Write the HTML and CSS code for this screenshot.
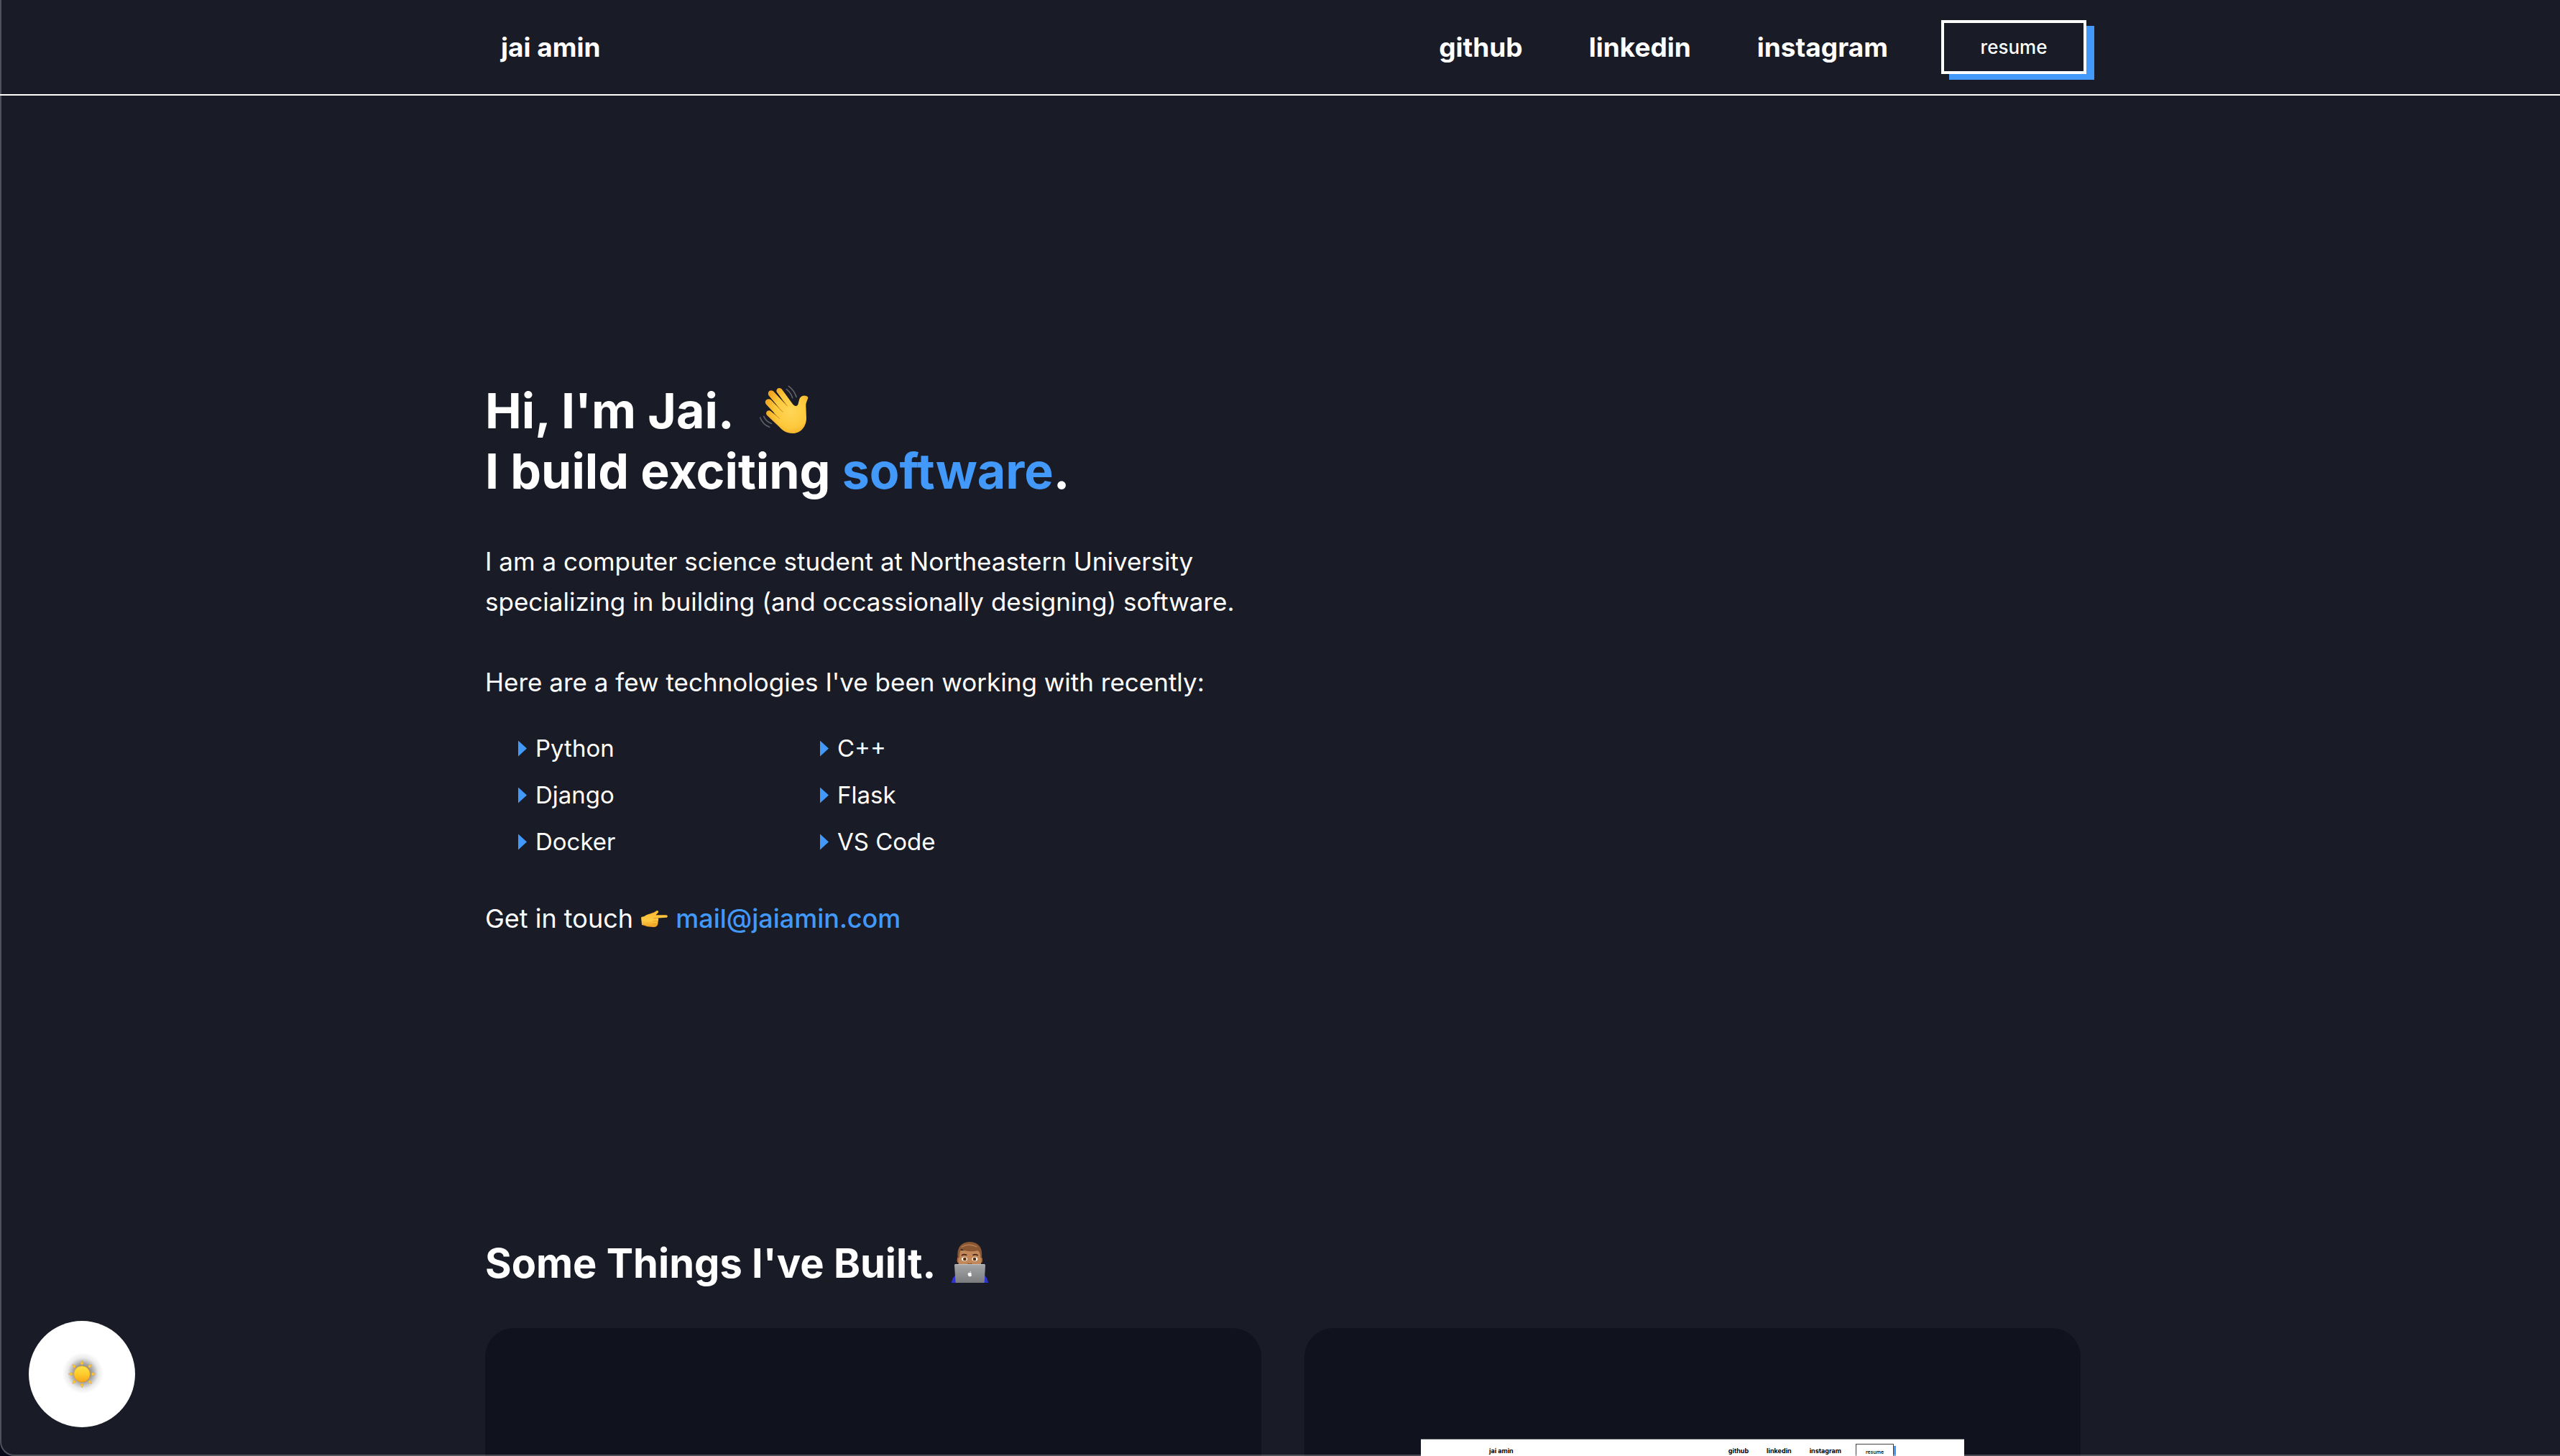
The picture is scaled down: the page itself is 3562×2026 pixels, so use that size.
FILE: index.html
```html
<!DOCTYPE html>
<html lang="en">
<head>
<meta charset="utf-8">
<meta name="viewport" content="width=device-width, initial-scale=1">
<title>jai amin</title>
<link rel="stylesheet" href="styles.css">
</head>
<body>
<div class="page">
  <header class="site-header">
    <div class="header-inner">
      <a class="logo" href="#">jai amin</a>
      <nav class="nav">
        <a href="#">github</a>
        <a href="#">linkedin</a>
        <a href="#">instagram</a>
        <button class="resume" type="button">resume</button>
      </nav>
    </div>
  </header>

  <main class="content">
    <section class="hero">
      <h1>Hi, I'm Jai.<svg class="wave" viewBox="50 45 210 210" aria-hidden="true">
          <defs>
            <radialGradient id="skin" cx="60%" cy="50%" r="62%">
              <stop offset="0" stop-color="#ffd657"/>
              <stop offset=".6" stop-color="#fdc93c"/>
              <stop offset="1" stop-color="#f0a420"/>
            </radialGradient>
          </defs>
          <path fill="url(#skin)" d="M124 76C119 60 140 54 147 67L192 128Q206 142 213 128L219 106C224 89 246 87 255 98C256 104 246 118 246 132L248 185C248 220 225 249 190 249C165 249 150 238 135 222L84 174C74 162 86 149 98 155L132 184L79 127C70 110 88 100 100 109L148 160L90 90C84 74 98 64 110 73L167 134Z"/>
          <path fill="none" stroke="#dc8f1c" stroke-width="3" stroke-linecap="round" d="M147 107L168 135M123 132L150 160M113 166L136 187"/>
          <path fill="none" stroke="#606265" stroke-width="5" stroke-linecap="round" d="M174 52Q198 70 206 97M165 65Q184 80 190 101M55 183Q66 212 94 223M70 178Q80 200 102 208"/>
        </svg><br>I build exciting <span class="accent">software</span>.</h1>

      <p class="lead">I am a computer science student at Northeastern University<br>specializing in building (and occassionally designing) software.</p>
      <p class="lead">Here are a few technologies I've been working with recently:</p>

      <ul class="tech">
        <li>Python</li>
        <li>C++</li>
        <li>Django</li>
        <li>Flask</li>
        <li>Docker</li>
        <li>VS Code</li>
      </ul>

      <p class="contact">Get in touch <svg class="point" viewBox="64 74 116 76" aria-hidden="true">
          <defs>
            <linearGradient id="hand" x1="0" y1="0" x2="0" y2="1">
              <stop offset="0" stop-color="#fbb62c"/>
              <stop offset=".6" stop-color="#ffcb45"/>
              <stop offset="1" stop-color="#eda01c"/>
            </linearGradient>
          </defs>
          <path fill="url(#hand)" d="M66 108Q67 102 78 102L88 96C98 91 118 88 129 79C137 73 143 82 136 88L128 96L171 96C180 96 180 107 171 107L138 109C141 116 138 121 137 127C138 140 131 147 117 147L92 145Q82 141 69 138Z"/>
          <path fill="none" stroke="#e49a1e" stroke-width="3" stroke-linecap="round" d="M118 110L138 109M117 122L137 121M116 134L135 134"/>
        </svg> <a class="mail" href="mailto:mail@jaiamin.com">mail@jaiamin.com</a></p>
    </section>

    <section class="work">
      <h2>Some Things I've Built. <svg class="coder" viewBox="75 54 153 171" aria-hidden="true">
          <defs>
            <linearGradient id="lid" x1="0" y1="0" x2="0" y2="1">
              <stop offset="0" stop-color="#a3a5a7"/>
              <stop offset="1" stop-color="#7b7d80"/>
            </linearGradient>
          </defs>
          <path fill="#2f33d6" d="M75 225Q78 198 100 188H204Q224 198 228 225Z"/>
          <ellipse cx="103" cy="130" rx="5" ry="12" fill="#a86d43"/>
          <ellipse cx="199" cy="130" rx="5" ry="12" fill="#a86d43"/>
          <path fill="#c2885a" d="M104 90H198V150Q190 175 151 178Q110 175 104 150Z"/>
          <path fill="#8a5732" d="M101 122C96 80 112 55 151 54C190 55 206 80 201 122L195 120C196 100 190 96 184 91C160 96 130 94 116 84C110 95 108 104 108 120Z"/>
          <path fill="none" stroke="#b07a50" stroke-width="5" stroke-linecap="round" d="M118 75Q145 58 180 74"/>
          <path fill="none" stroke="#4a2a17" stroke-width="5" stroke-linecap="round" d="M118 110Q127 104 137 109M165 109Q175 104 184 110"/>
          <ellipse cx="129" cy="126" rx="12" ry="8" fill="#fff"/>
          <ellipse cx="172" cy="126" rx="12" ry="8" fill="#fff"/>
          <circle cx="130" cy="126" r="7" fill="#5b3010"/>
          <circle cx="171" cy="126" r="7" fill="#5b3010"/>
          <path fill="none" stroke="#8c5332" stroke-width="4" stroke-linecap="round" d="M144 144Q151 149 158 144"/>
          <path fill="url(#lid)" d="M90 147H212Q216 147 216 152L212 225H92L87 152Q87 147 90 147Z"/>
          <path fill="none" stroke="#c2c4c6" stroke-width="3" d="M90 149H213"/>
          <path fill="#fff" d="M151 184C146 181 142 185 143 190C144 196 148 200 151 198C155 200 158 197 160 193C156 191 156 187 159 185C156 182 154 183 151 184ZM151 182Q151 177 156 176Q156 181 151 182Z"/>
        </svg></h2>
      <div class="cards">
        <article class="card"></article>
        <article class="card">
          <div class="preview">
            <span class="preview-logo">jai amin</span>
            <div class="preview-nav">
              <span>github</span>
              <span>linkedin</span>
              <span>instagram</span>
              <span class="preview-resume">resume</span>
            </div>
          </div>
        </article>
      </div>
    </section>
  </main>
</div>

<button class="theme-toggle" type="button" aria-label="Switch theme">
  <svg viewBox="-90 -90 180 180" aria-hidden="true">
    <defs>
      <radialGradient id="glow">
        <stop offset="0" stop-color="#000" stop-opacity=".7"/>
        <stop offset=".45" stop-color="#000" stop-opacity=".36"/>
        <stop offset=".75" stop-color="#000" stop-opacity=".08"/>
        <stop offset="1" stop-color="#000" stop-opacity="0"/>
      </radialGradient>
      <linearGradient id="sun" x1="0" y1="0" x2="0" y2="1">
        <stop offset="0" stop-color="#ffe14a"/>
        <stop offset=".5" stop-color="#ffcc2a"/>
        <stop offset="1" stop-color="#f5a51d"/>
      </linearGradient>
      <path id="ray" d="M-7-42L0-57L7-42Q0-38-7-42Z"/>
    </defs>
    <circle cx="4" cy="-4" r="86" fill="url(#glow)"/>
    <g fill="#fdc935" stroke="#d98e2b" stroke-width="1">
      <use href="#ray"/>
      <use href="#ray" transform="rotate(45)"/>
      <use href="#ray" transform="rotate(90)"/>
      <use href="#ray" transform="rotate(135)"/>
      <use href="#ray" transform="rotate(180)"/>
      <use href="#ray" transform="rotate(225)"/>
      <use href="#ray" transform="rotate(270)"/>
      <use href="#ray" transform="rotate(315)"/>
    </g>
    <circle r="34" fill="url(#sun)" stroke="#dd8f22" stroke-width="2"/>
  </svg>
</button>
<div class="window-edge"></div>
</body>
</html>
```
FILE: styles.css
```css
* {
  box-sizing: border-box;
}

body {
  margin: 0;
  background: #191c26;
  color: #fff;
  font-family: Inter, "Liberation Sans", sans-serif;
}

h1, h2, p, ul {
  margin: 0;
}

a {
  color: inherit;
  text-decoration: none;
}

button {
  font-family: inherit;
  cursor: pointer;
}

.page {
  height: 100vh;
  overflow: hidden;
}

/* Header */

.site-header {
  padding: 28px 0 28px 38px;
  border-bottom: 2px solid #fff;
}

.header-inner {
  display: flex;
  align-items: center;
  justify-content: space-between;
  max-width: 2206px;
  margin: 0 auto;
  font-size: 37px;
  line-height: 44px;
  font-weight: 700;
}

.nav {
  display: flex;
  align-items: center;
  gap: 92px;
}

.resume {
  width: 202px;
  height: 75px;
  margin-left: -18px;
  padding: 0;
  border: 4px solid #fff;
  background: #191c26;
  box-shadow: 11px 8px 0 #4299f9;
  color: #fff;
  font-size: 26px;
  font-weight: 500;
}

/* Hero */

.content {
  padding-left: 8px;
}

.hero,
.work {
  max-width: 2220px;
  margin: 0 auto;
}

.hero {
  padding: 396px 0 418px;
}

h1 {
  margin-bottom: 56px;
  font-size: 68px;
  line-height: 84px;
  font-weight: 700;
}

.accent,
.mail {
  color: #4299f9;
}

.wave {
  width: 70px;
  height: 70px;
  margin-left: 34px;
  vertical-align: -9px;
}

.lead {
  margin-bottom: 56px;
  font-size: 35px;
  line-height: 56px;
}

.tech {
  display: grid;
  grid-template-columns: 420px 420px;
  row-gap: 20px;
  margin: -14px 0 56px;
  padding-left: 46px;
  list-style: none;
  font-size: 33px;
  line-height: 45px;
}

.tech li {
  display: flex;
  align-items: center;
  gap: 12px;
}

.tech li::before {
  content: "";
  width: 12px;
  height: 22px;
  background: #4299f9;
  clip-path: polygon(0 0, 100% 50%, 0 100%);
}

.contact {
  font-size: 36px;
  line-height: 56px;
}

.point {
  width: 39px;
  height: 25px;
}

.mail {
  font-weight: 500;
}

/* Work */

h2 {
  margin-bottom: 56px;
  font-size: 56px;
  line-height: 68px;
  font-weight: 700;
}

.coder {
  width: 51px;
  height: 57px;
  margin-left: 10px;
  vertical-align: -7px;
}

.cards {
  display: grid;
  grid-template-columns: 1fr 1fr;
  gap: 60px;
}

.card {
  min-height: 720px;
  padding: 154px 15%;
  border-radius: 40px;
  background: #10121d;
}

.preview {
  display: flex;
  justify-content: space-between;
  min-height: 400px;
  padding: 6px 98px 0 95px;
  border-top: 1px solid #555a63;
  background: #fff;
  color: #000;
  font-size: 9px;
  line-height: 20px;
  font-weight: 700;
}

.preview-nav {
  display: flex;
  align-items: flex-start;
  gap: 25px;
}

.preview-resume {
  width: 53px;
  margin-left: -5px;
  border: 1px solid #444;
  box-shadow: 3px 3px 0 #4299f9;
  font-size: 7px;
  line-height: 22px;
  font-weight: 500;
  text-align: center;
}

/* Theme switch */

.theme-toggle {
  position: fixed;
  left: 40px;
  bottom: 40px;
  display: grid;
  place-items: center;
  width: 148px;
  height: 148px;
  padding: 0;
  border: 0;
  border-radius: 50%;
  background: #fff;
}

.theme-toggle svg {
  width: 60px;
  height: 60px;
}

.window-edge {
  position: fixed;
  inset: 0;
  border: solid rgba(255, 255, 255, .24);
  border-width: 0 0 2px 2px;
  border-bottom-left-radius: 20px;
  box-shadow: 0 0 0 20px #07081a;
  pointer-events: none;
}
```
